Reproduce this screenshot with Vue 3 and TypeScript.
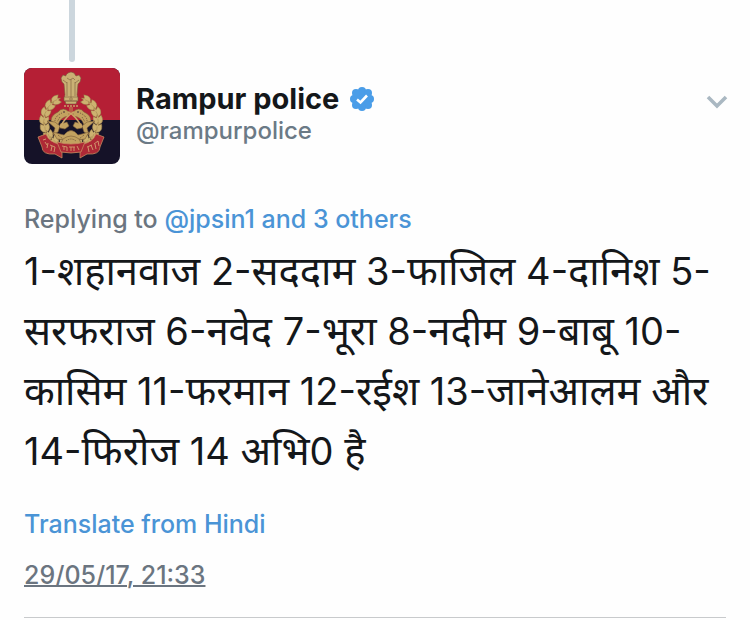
<script setup lang="ts">
interface Leaf {
  x: number
  y: number
  turn: number
}

const tweetLines: string[] = [
  '1-शहानवाज 2-सददाम 3-फाजिल 4-दानिश 5-',
  'सरफराज 6-नवेद 7-भूरा 8-नदीम 9-बाबू 10-',
  'कासिम 11-फरमान 12-रईश 13-जानेआलम और',
  '14-फिरोज 14 अभि0 है',
]

// Devanagari is set a little larger than the digits beside it.
const lineParts = tweetLines.map((line) =>
  line
    .split(/([\u0900-\u097f]+)/)
    .filter((part) => part.length > 0)
    .map((part) => ({ part, hindi: /[\u0900-\u097f]/.test(part) })),
)

// Laurel leaves run down both sides of the emblem from the pillar to the ribbon.
const leaves: Leaf[] = []
for (let i = 0; i < 8; i++) {
  const degrees = -57 + i * 18
  const radians = (degrees * Math.PI) / 180
  const dx = 27 * Math.cos(radians)
  const y = 53 + 25 * Math.sin(radians)
  leaves.push({ x: 47 + dx, y, turn: degrees - 8 })
  leaves.push({ x: 47 - dx, y, turn: 8 - degrees })
}
</script>

<template>
  <main class="page">
    <div class="thread" aria-hidden="true"></div>
    <article class="tweet">
      <header class="author">
        <svg class="avatar" viewBox="0 0 96 96" role="img" aria-label="Rampur police">
          <rect width="96" height="96" fill="#151228" />
          <rect width="96" height="52" fill="#b51f35" />
          <g fill="none" stroke="#a98543" stroke-width="1.5">
            <path d="M32 31 C13 43 15 72 39 79" />
            <path d="M62 31 C81 43 79 72 55 79" />
          </g>
          <g fill="#cdb270" stroke="#8a6a3c" stroke-width="0.4">
            <g v-for="(leaf, i) in leaves" :key="i" :transform="`translate(${leaf.x} ${leaf.y}) rotate(${leaf.turn})`">
              <path d="M-3 4 Q-6 1 -4 -4 L-1 -2 L0 -5 L1 -2 L4 -4 Q6 1 3 4 L0 5 Z" />
              <path d="M0 -1 V4" stroke="#9a7a45" />
            </g>
          </g>
          <!-- lion capital and pillar -->
          <g fill="#cab174" stroke="#795b3d" stroke-width="0.6">
            <path d="M42 7 L44 5 L47 4 L50 5 L52 8 L55 7 L57 10 L56 14 L54 16 L53 27 L54 30 L40 30 L41 27 L40 16 L38 14 L37 10 L39 7 L42 8 Z" />
            <path d="M40 29 H54 V33 H40 Z M41 33 H53 L52 36 H42 Z" />
            <path d="M43 14 V28 M47 11 V29 M51 14 V28 M43 10 L46 12 L49 10 L51 12 M39 12 L43 15 M55 12 L51 15" fill="none" />
            <circle cx="47" cy="31" r="1.3" />
          </g>
          <path d="M40 38 H54" stroke="#c5a268" stroke-width="1.5" stroke-dasharray="2 1" />
          <path d="M46 39 V46 M48 39 V46" stroke="#bf9858" />
          <!-- paired fish around the centre -->
          <g fill="#c3a260" stroke="#7c5c37" stroke-width="0.6">
            <path d="M45 44 Q39 38 34 44 Q27 47 27 53 L34 57 Q36 49 45 48 Z" />
            <path d="M49 44 Q55 38 60 44 Q67 47 67 53 L60 57 Q58 49 49 48 Z" />
            <path d="M23 53 L31 54 L36 58 L34 64 L29 67 L31 60 Z" />
            <path d="M71 53 L63 54 L58 58 L60 64 L65 67 L63 60 Z" />
            <path d="M36 56 L43 54 L45 58 L41 61 L36 60 Z M58 56 L51 54 L49 58 L53 61 L58 60 Z" />
            <path d="M29 64 L36 66 L40 67 Q47 58 54 67 L58 66 L65 64 L61 71 L54 72 Q47 66 40 72 L33 71 Z" />
            <path d="M39 71 Q47 65 55 71 L57 75 L53 78 Q47 75 41 78 L37 75 Z" />
          </g>
          <path d="M44 44 Q51 47 58 59 M50 44 Q43 47 36 59" fill="none" stroke="#c9a567" stroke-width="1.5" />
          <g fill="none" stroke="#604835" stroke-width="0.8" stroke-dasharray="1 1">
            <path d="M38 45 Q31 48 31 53 M36 49 L33 54" />
            <path d="M56 45 Q63 48 63 53 M58 49 L61 54" />
            <path d="M34 67 L39 71 M60 67 L55 71 M42 73 Q47 69 52 73" />
          </g>
          <circle cx="40" cy="44" r="0.8" fill="#352233" />
          <circle cx="54" cy="44" r="0.8" fill="#352233" />
          <!-- motto ribbon -->
          <g fill="#ae2936" stroke="#c58b60" stroke-width="0.8">
            <path d="M14 69 L22 66 Q25 74 35 76 L38 81 L38 90 L31 86 Q18 87 18 79 Z" />
            <path d="M80 69 L72 66 Q69 74 59 76 L56 81 L56 90 L63 86 Q76 87 76 79 Z" />
            <path d="M33 74 Q47 78 61 74 L57 84 Q47 86 37 84 Z" />
          </g>
          <g fill="none" stroke="#d4a071" stroke-width="0.9">
            <path d="M19 72 L22 71 M21 74 L23 77 M24 75 L23 80 M26 77 L31 79 M28 78 L27 83 M31 79 L30 84" />
            <path d="M38 78 L43 79 M40 79 V82 M43 79 V83 M45 79 H51 M47 79 V83 M50 79 V83 M53 78 L55 82" />
            <path d="M63 79 L68 77 M64 79 L65 84 M67 77 L69 82 M70 76 L74 73 M71 76 L72 81 M74 73 L75 78" />
          </g>
        </svg>
        <div class="identity">
          <div class="name-row">
            <span class="name">Rampur police</span>
            <svg class="verified" viewBox="0 0 26 26" role="img" aria-label="Verified">
              <g fill="#4a9de8">
                <circle cx="13" cy="13" r="10" />
                <circle cx="13" cy="5" r="4" />
                <circle cx="19" cy="7" r="4" />
                <circle cx="21" cy="13" r="4" />
                <circle cx="19" cy="19" r="4" />
                <circle cx="13" cy="21" r="4" />
                <circle cx="7" cy="19" r="4" />
                <circle cx="5" cy="13" r="4" />
                <circle cx="7" cy="7" r="4" />
              </g>
              <path d="M8 13.5 L11.5 16.5 L18 9.5" fill="none" stroke="#fff" stroke-width="2.6" />
            </svg>
          </div>
          <a class="handle" href="#profile">@rampurpolice</a>
        </div>
        <button class="more" type="button" aria-label="More options">
          <svg viewBox="0 0 22 14" aria-hidden="true">
            <path d="M2 2 L11 11 L20 2" fill="none" stroke="#aab8c2" stroke-width="3.6" />
          </svg>
        </button>
      </header>
      <p class="replying">Replying to <a href="#replies">@jpsin1 and 3 others</a></p>
      <p class="text" lang="hi">
        <span v-for="(parts, i) in lineParts" :key="i" class="line"><span v-for="(item, j) in parts" :key="j" :class="{ hindi: item.hindi }">{{ item.part }}</span></span>
      </p>
      <button class="translate" type="button">Translate from Hindi</button>
      <footer class="meta"><a href="#status">29/05/17, 21:33</a></footer>
    </article>
  </main>
</template>

<style>
body {
  margin: 0;
  background: #fefefe;
}
</style>

<style scoped>
.page {
  padding: 0 24px;
  color: #14171a;
  font-family: Inter, "Noto Sans", sans-serif;
  font-size: 25px;
  line-height: 32px;
}

.thread {
  width: 6px;
  height: 62px;
  margin-left: 45px;
  border-radius: 0 0 3px 3px;
  background: #ccd6dd;
}

.tweet {
  padding: 6px 0 26px;
  border-bottom: 1px solid #c8cacc;
}

.author {
  display: flex;
  gap: 16px;
}

.avatar {
  flex: none;
  width: 96px;
  height: 96px;
  border-radius: 8px;
}

.identity {
  flex: 1;
  padding-top: 15px;
}

.name-row {
  display: flex;
  align-items: center;
  gap: 10px;
}

.name {
  font-size: 29px;
  font-weight: 700;
}

.verified {
  width: 26px;
  height: 26px;
}

.handle {
  display: block;
  color: #6b7a86;
  font-size: 24px;
  font-weight: 500;
  text-decoration: none;
}

button {
  padding: 0;
  border: 0;
  background: none;
  font: inherit;
  cursor: pointer;
}

.more {
  align-self: flex-start;
  height: 32px;
  margin: 18px -2px 0 0;
}

.more svg {
  display: block;
  width: 22px;
  height: 14px;
}

.replying {
  margin: 39px 0 0;
  color: #6b7580;
  font-weight: 500;
}

.replying a,
.translate {
  color: #4a94d6;
  font-weight: 500;
  text-decoration: none;
}

.text {
  margin: 6px 0 0;
  font-size: 38px;
  line-height: 60px;
}

.line {
  display: block;
  height: 60px;
  white-space: nowrap;
}

.hindi {
  font-size: 40px;
}

.translate {
  display: block;
  margin-top: 27px;
}

.meta {
  margin-top: 19px;
  font-weight: 500;
}

.meta a {
  color: #6b7580;
  text-decoration: underline;
  text-decoration-thickness: 2px;
}
</style>
